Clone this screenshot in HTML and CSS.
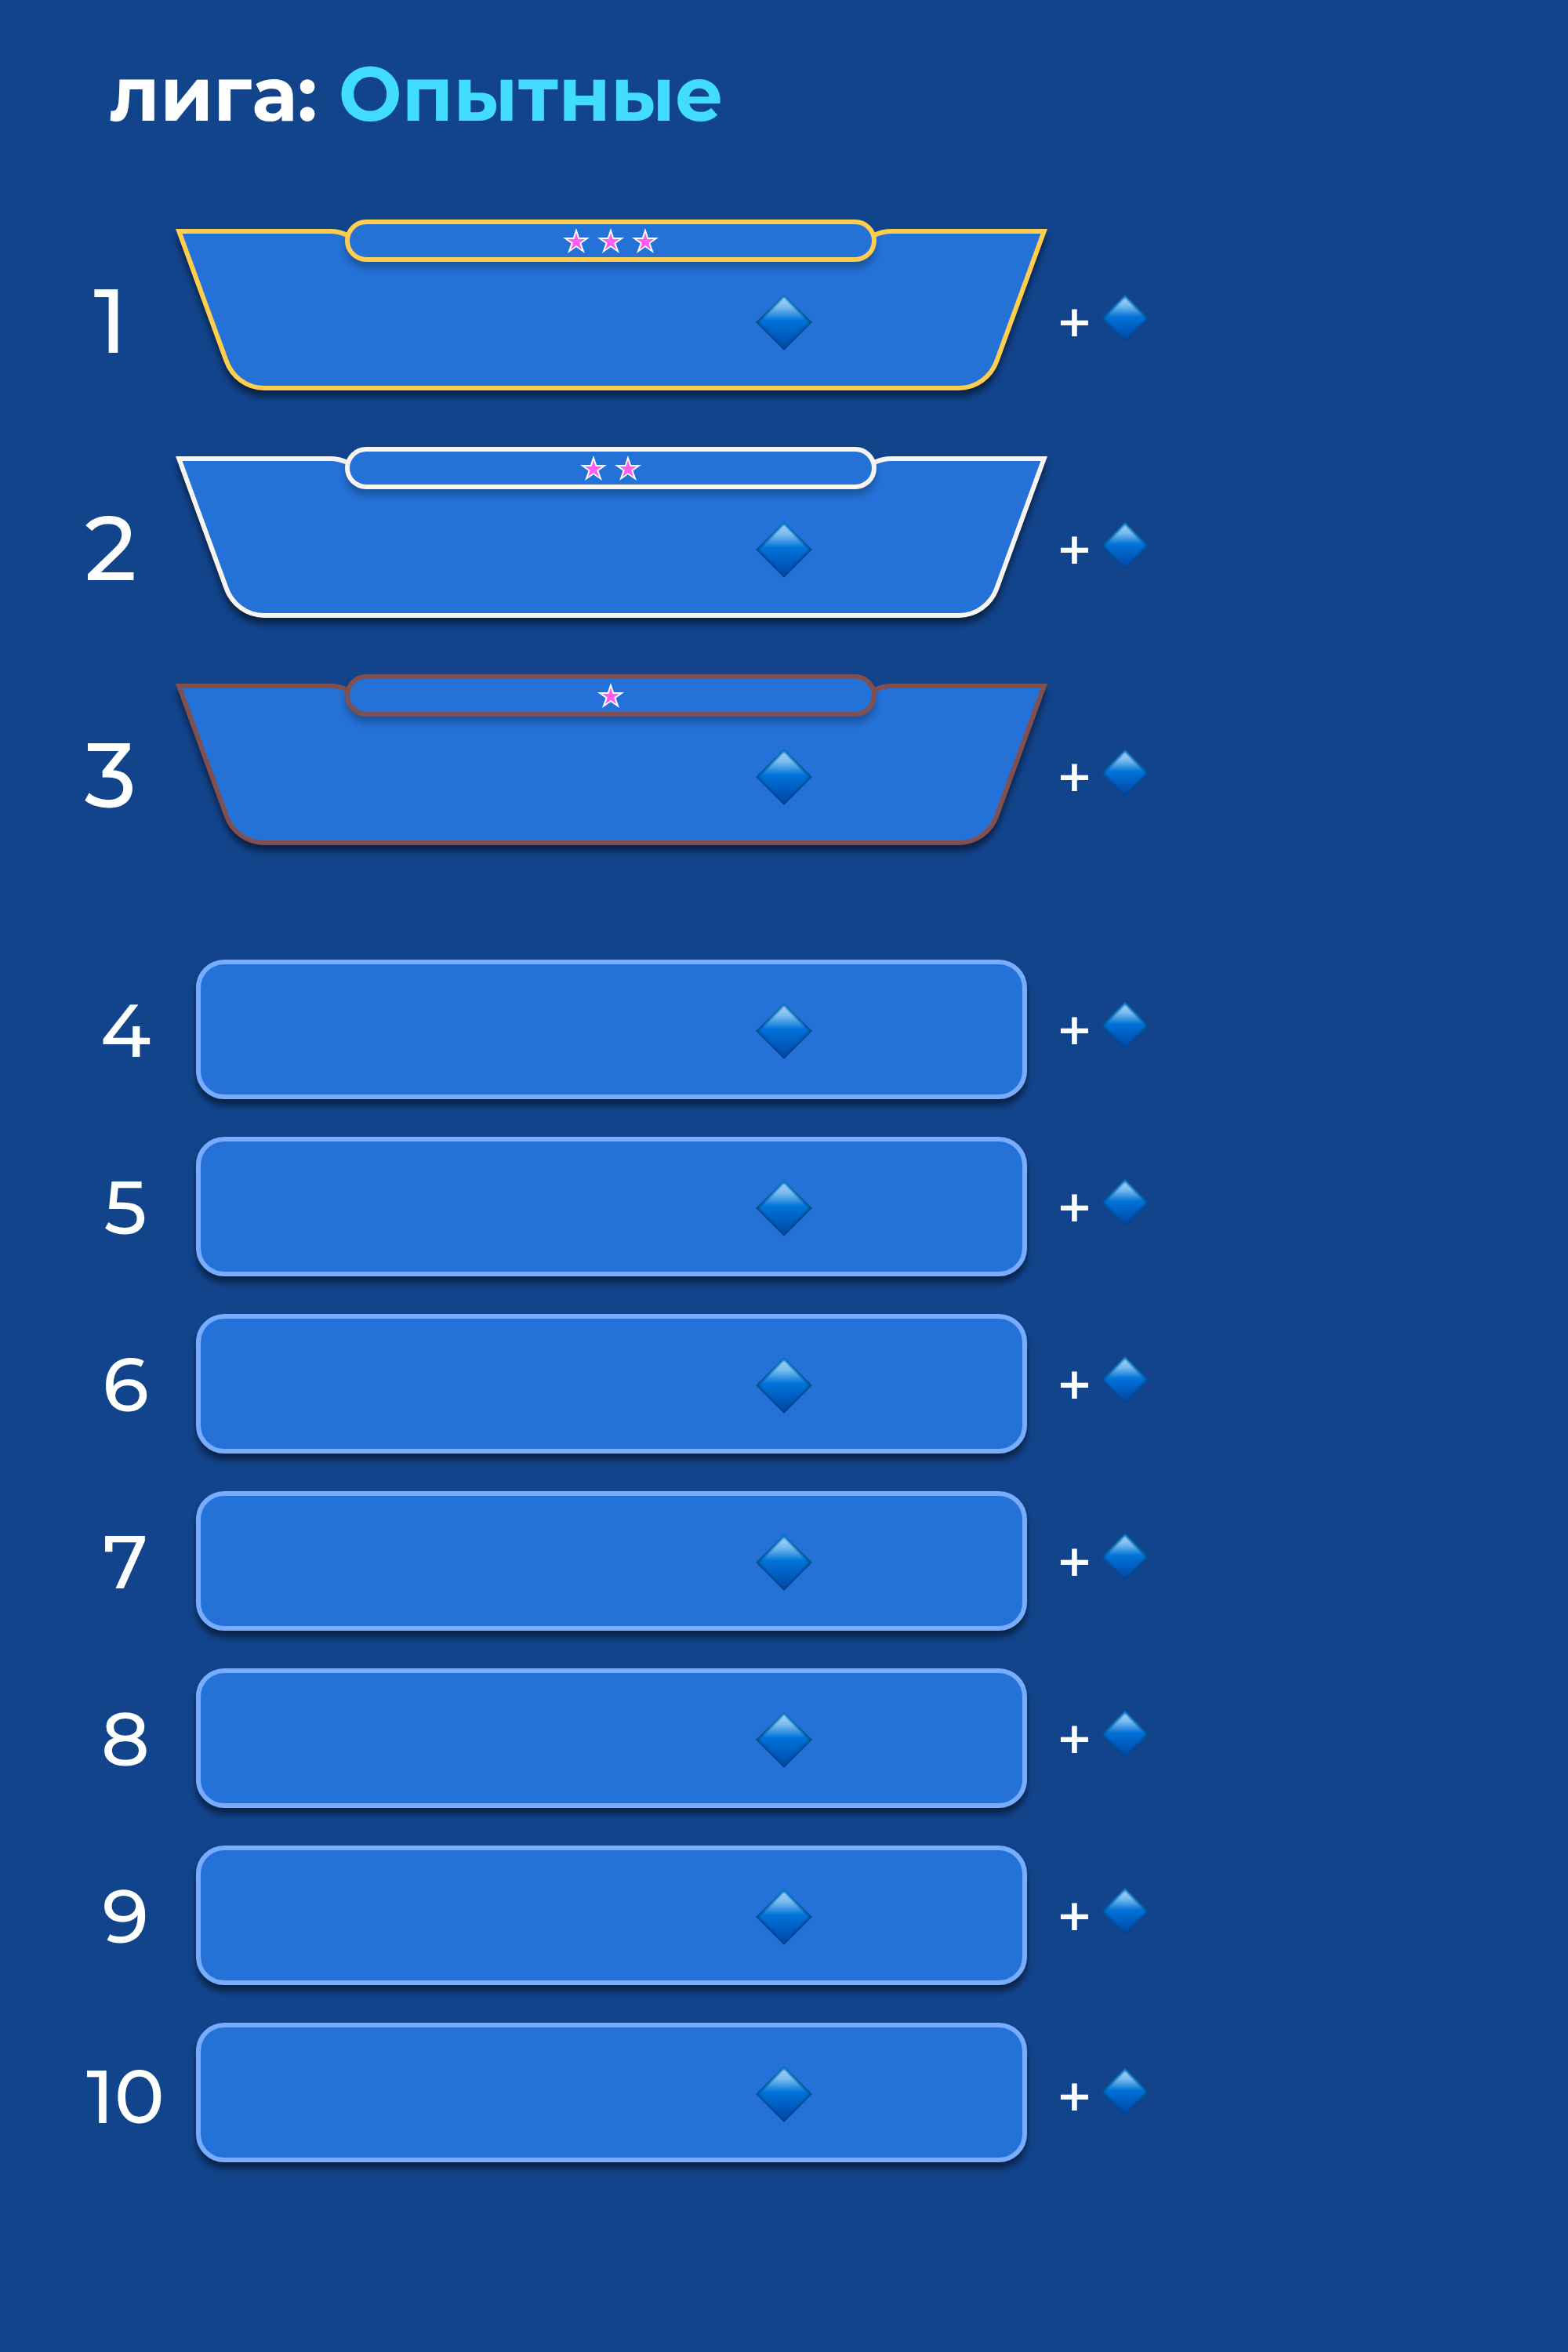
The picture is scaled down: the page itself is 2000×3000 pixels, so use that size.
FILE: index.html
```
<!DOCTYPE html>
<html lang="ru">
<head>
<meta charset="utf-8">
<title>Лига: Опытные</title>
<link rel="stylesheet" href="styles.css">
</head>
<body>
<svg class="defs" width="0" height="0" aria-hidden="true">
  <defs>
    <linearGradient id="gemBody" x1="0" y1="0" x2="0" y2="1">
      <stop offset="0" stop-color="#0075c4"/>
      <stop offset=".48" stop-color="#005397"/>
      <stop offset="1" stop-color="#003f90"/>
    </linearGradient>
    <linearGradient id="gemFace" x1="0" y1="0" x2="0" y2="1">
      <stop offset="0" stop-color="#a5d1f5"/>
      <stop offset=".2" stop-color="#78bbee"/>
      <stop offset=".46" stop-color="#0072d8"/>
      <stop offset=".7" stop-color="#0060c4"/>
      <stop offset="1" stop-color="#0048a4"/>
    </linearGradient>
    <filter id="soft" x="-10%" y="-10%" width="120%" height="120%"><feGaussianBlur stdDeviation="1"/></filter>
    <symbol id="gem" viewBox="0 0 72 72">
      <path d="M36 0 72 36 36 72 0 36Z" fill="url(#gemBody)"/>
      <path d="M36 4 68 36 36 69 4 36Z" fill="url(#gemFace)" filter="url(#soft)"/>
    </symbol>
    <symbol id="star" viewBox="0 0 34 32">
      <path d="M17 0 21 12 34 12 23.5 19.5 28 32 17 24.2 6 32 10.5 19.5 0 12 13 12Z" fill="#fff"/>
      <path d="M17 6 19.6 14 28 14 21.2 18.7 24 27.2 17 22 10 27.2 12.8 18.7 6 14 14.4 14Z" fill="#ff5cf4"/>
    </symbol>
    <symbol id="plate" viewBox="0 0 1112 206">
      <path d="M4.3 3H197C206 3 212 4.500 219 8H891C898 4.500 905 3 914 3H1107.700L1047.500 168C1040 189 1021 203 999 203H113C91 203 72 189 64.500 168Z" fill="#2472d7" stroke="currentColor" stroke-width="6" stroke-miterlimit="10"/>
    </symbol>
  </defs>
</svg>
<main class="board">
  <h1 class="title">лига: <span class="league">Опытные</span></h1>
  <ol class="podium">
    <li class="row gold"><span class="rank">1</span><div class="card"><svg class="plate"><use href="#plate"/></svg><div class="stars"><svg><use href="#star"/></svg><svg><use href="#star"/></svg><svg><use href="#star"/></svg></div><svg class="gem"><use href="#gem"/></svg></div><div class="bonus"><span class="plus">+</span><svg class="gem-small"><use href="#gem"/></svg></div></li>
    <li class="row silver"><span class="rank">2</span><div class="card"><svg class="plate"><use href="#plate"/></svg><div class="stars"><svg><use href="#star"/></svg><svg><use href="#star"/></svg></div><svg class="gem"><use href="#gem"/></svg></div><div class="bonus"><span class="plus">+</span><svg class="gem-small"><use href="#gem"/></svg></div></li>
    <li class="row bronze"><span class="rank">3</span><div class="card"><svg class="plate"><use href="#plate"/></svg><div class="stars"><svg><use href="#star"/></svg></div><svg class="gem"><use href="#gem"/></svg></div><div class="bonus"><span class="plus">+</span><svg class="gem-small"><use href="#gem"/></svg></div></li>
  </ol>
  <ol class="list">
    <li class="row"><span class="rank">4</span><div class="card"><svg class="gem"><use href="#gem"/></svg></div><div class="bonus"><span class="plus">+</span><svg class="gem-small"><use href="#gem"/></svg></div></li>
    <li class="row"><span class="rank">5</span><div class="card"><svg class="gem"><use href="#gem"/></svg></div><div class="bonus"><span class="plus">+</span><svg class="gem-small"><use href="#gem"/></svg></div></li>
    <li class="row"><span class="rank">6</span><div class="card"><svg class="gem"><use href="#gem"/></svg></div><div class="bonus"><span class="plus">+</span><svg class="gem-small"><use href="#gem"/></svg></div></li>
    <li class="row"><span class="rank">7</span><div class="card"><svg class="gem"><use href="#gem"/></svg></div><div class="bonus"><span class="plus">+</span><svg class="gem-small"><use href="#gem"/></svg></div></li>
    <li class="row"><span class="rank">8</span><div class="card"><svg class="gem"><use href="#gem"/></svg></div><div class="bonus"><span class="plus">+</span><svg class="gem-small"><use href="#gem"/></svg></div></li>
    <li class="row"><span class="rank">9</span><div class="card"><svg class="gem"><use href="#gem"/></svg></div><div class="bonus"><span class="plus">+</span><svg class="gem-small"><use href="#gem"/></svg></div></li>
    <li class="row last"><span class="rank">10</span><div class="card"><svg class="gem"><use href="#gem"/></svg></div><div class="bonus"><span class="plus">+</span><svg class="gem-small"><use href="#gem"/></svg></div></li>
  </ol>
</main>
</body>
</html>
```
FILE: styles.css
```
* { box-sizing: border-box; }
body { margin: 0; background: #12448c; color: #fff; font-family: Montserrat, Inter, sans-serif; }
svg { display: block; }
.defs { position: absolute; }
.board { height: 3000px; overflow: hidden; }
.title { margin: 0; padding: 60px 0 0 140px; height: 292px; font-size: 96px; line-height: 120px; font-weight: 700; white-space: nowrap; }
.league { color: #42dcff; }
.podium, .list { list-style: none; margin: 0; padding: 0; display: flex; flex-direction: column; }
.podium { gap: 84px; }
.list { gap: 48px; padding-top: 146px; }
.row { display: flex; }
.rank { font-weight: 500; white-space: nowrap; text-align: center; }

.podium .rank { width: 224px; padding: 49px 12px 0 70px; font-size: 116px; line-height: 136px; }
.podium .card { position: relative; width: 1112px; height: 206px; }
.plate { width: 1112px; height: 206px; filter: drop-shadow(0 8px 4px rgba(0,0,0,.5)); }
.stars { position: absolute; left: 216px; top: -12px; width: 678px; height: 54px; border: 6px solid currentColor; border-radius: 27px; background: #2472d7; display: flex; justify-content: center; align-items: center; gap: 10px; box-shadow: 0 8px 8px rgba(0,0,0,.25); }
.stars svg { width: 34px; height: 32px; }
.podium .gem { position: absolute; left: 740px; top: 83px; }
.gold .card { color: #ffce4f; }
.silver .card { color: #f7f4f2; }
.bronze .card { color: #814f4f; }
.gem { width: 72px; height: 72px; }

.bonus { display: flex; }
.plus { font-weight: 500; font-size: 78px; line-height: 72px; width: 69px; text-align: center; }
.gem-small { width: 60px; height: 60px; }
.podium .bonus { padding-top: 84px; }
.podium .plus { line-height: 70px; }

.list .rank { width: 250px; padding: 34px 0 0 70px; font-size: 96px; line-height: 112px; }
.list .card { width: 1060px; height: 178px; border: 6px solid #78acff; border-radius: 36px; background: #2472d7; box-shadow: 0 8px 8px rgba(0,0,0,.5); padding: 49px 0 0 708px; }
.list .bonus { padding: 54px 0 0 26px; }
.list .last .rank { padding-top: 38px; }
.list .last .bonus { padding-top: 58px; }
```
